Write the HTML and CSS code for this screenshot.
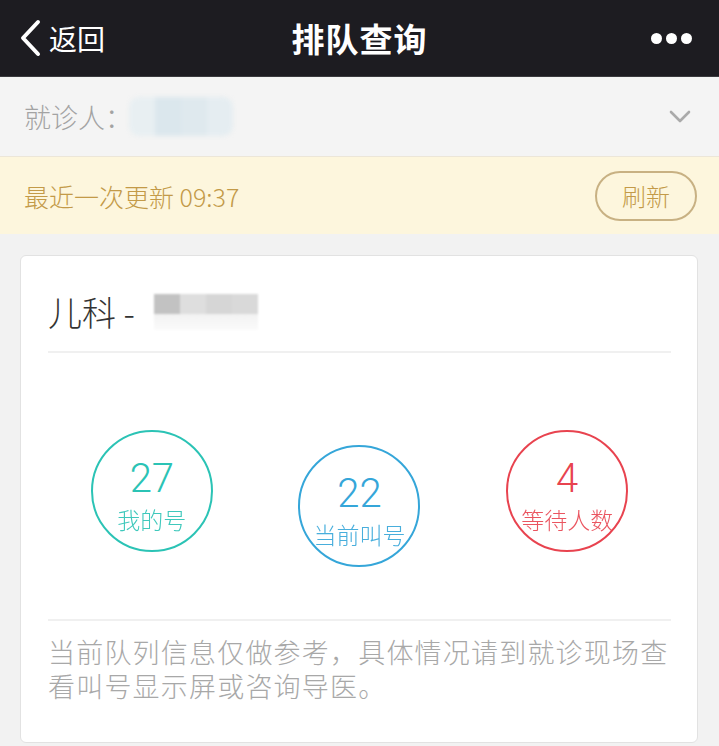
FILE: index.html
```html
<!DOCTYPE html>
<html lang="zh-CN">
<head>
<meta charset="utf-8">
<title>排队查询</title>
<link rel="stylesheet" href="styles.css">
</head>
<body>
<div class="page">
  <header class="nav">
    <div class="nav-back">
      <svg class="back-icon" width="24" height="38" viewBox="0 0 24 38"><path d="M20 3 L5 19 L20 35" fill="none" stroke="#fff" stroke-width="4" stroke-linecap="round" stroke-linejoin="round"/></svg>
      <span class="back-text">返回</span>
    </div>
    <div class="nav-title">排队查询</div>
    <div class="nav-more"><span class="dot"></span><span class="dot"></span><span class="dot"></span></div>
  </header>

  <div class="patient">
    <span class="patient-label">就诊人：</span>
    <span class="blur blur-blue"><i></i><i></i><i></i><i></i></span>
    <svg class="chev" width="22" height="14" viewBox="0 0 22 14"><path d="M2 2 L11 11 L20 2" fill="none" stroke="#aaa" stroke-width="2.6" stroke-linecap="round" stroke-linejoin="round"/></svg>
  </div>

  <div class="update">
    <span class="update-text">最近一次更新 09:37</span>
    <button class="refresh">刷新</button>
  </div>

  <section class="card">
    <div class="card-title">
      <span>儿科 - </span>
      <span class="blur blur-gray"><i></i><i></i><i></i><i></i></span>
    </div>
    <div class="stats">
      <div class="stat"><div class="ring teal"><span class="num">27</span><span class="lbl">我的号</span></div></div>
      <div class="stat low"><div class="ring blue"><span class="num">22</span><span class="lbl">当前叫号</span></div></div>
      <div class="stat"><div class="ring red"><span class="num">4</span><span class="lbl">等待人数</span></div></div>
    </div>
    <p class="note">当前队列信息仅做参考，具体情况请到就诊现场查看叫号显示屏或咨询导医。</p>
  </section>
</div>
</body>
</html>
```

FILE: styles.css
```css
* { box-sizing: border-box; }
html, body { margin: 0; padding: 0; }
body {
  width: 719px;
  height: 746px;
  overflow: hidden;
  background: #f2f2f2;
  font-family: "Noto Sans CJK SC", "Noto Sans", sans-serif;
}
.page { display: flex; flex-direction: column; }

.nav {
  height: 77px;
  background: #1d1c21;
  display: flex;
  align-items: center;
  position: relative;
  color: #fff;
  border-bottom: 1px solid #3a3a3e;
}
.nav-back { display: flex; align-items: center; padding-left: 18px; }
.back-icon { display: block; }
.back-text { font-size: 28px; margin-left: 7px; font-weight: 400; }
.nav-title {
  position: absolute;
  left: 0; right: 0;
  text-align: center;
  font-size: 33px;
  font-weight: 700;
  letter-spacing: 1px;
  pointer-events: none;
}
.nav-more { margin-left: auto; margin-right: 27px; display: flex; gap: 4px; }
.dot { width: 11px; height: 11px; border-radius: 50%; background: #fff; }

.patient {
  height: 80px;
  background: #f4f4f4;
  display: flex;
  align-items: center;
  padding: 0 28px 0 24px;
  border-bottom: 1px solid #ece6d8;
}
.patient-label { font-size: 27px; color: #a3a3a3; font-weight: 300; }
.blur {
  display: inline-flex;
  filter: blur(2px);
}
.blur i { display: block; width: 26px; }
.blur-blue { height: 39px; margin-left: -3px; border-radius: 10px; overflow: hidden; }
.blur-blue i:nth-child(1) { background: #e8eff2; }
.blur-blue i:nth-child(2) { background: #dbe7ed; }
.blur-blue i:nth-child(3) { background: #dfe9ee; }
.blur-blue i:nth-child(4) { background: #e5edf1; }
.chev { margin-left: auto; }

.update {
  height: 77px;
  background: #fdf6dd;
  display: flex;
  align-items: center;
  padding: 0 22px 0 24px;
}
.update-text { font-size: 25px; color: #c39a48; font-weight: 300; }
.refresh {
  margin-left: auto;
  width: 102px;
  height: 50px;
  border: 2px solid #c8b183;
  border-radius: 25px;
  background: transparent;
  color: #c39a48;
  font-family: inherit;
  font-size: 24px;
  font-weight: 300;
  padding: 0;
}

.card {
  margin: 21px 21px 0 20px;
  background: #fff;
  border: 1px solid #e2e2e2;
  border-radius: 6px;
  padding: 0 26px 0 27px;
  height: 488px;
}
.card-title {
  height: 97px;
  display: flex;
  align-items: center;
  padding-top: 16px;
  font-size: 34px;
  color: #333;
  font-weight: 300;
  border-bottom: 2px solid #f0f0f0;
  white-space: pre;
}
.blur-gray {
  display: inline-grid;
  grid-template-columns: repeat(4, 26px);
  grid-template-rows: 20px 16px;
  height: 36px;
  margin-left: 12px;
  margin-top: 0;
  filter: blur(1px);
}
.blur-gray i { width: auto; }
.blur-gray i:nth-child(1) { background: #c2c2c2; }
.blur-gray i:nth-child(2) { background: #dedede; }
.blur-gray i:nth-child(3) { background: #d6d6d6; }
.blur-gray i:nth-child(4) { background: #d9d9d9; }
.blur-gray::after { content: ""; grid-column: 1 / 5; background: linear-gradient(#f2f2f2, #fbfbfb); }

.stats {
  display: grid;
  grid-template-columns: repeat(3, 1fr);
  height: 268px;
  padding-top: 77px;
  border-bottom: 2px solid #f0f0f0;
}
.stat { display: flex; justify-content: center; align-items: flex-start; }
.stat.low { padding-top: 15px; }
.ring {
  width: 122px;
  height: 122px;
  border-radius: 50%;
  border: 2px solid currentColor;
  display: flex;
  flex-direction: column;
  align-items: center;
  justify-content: center;
  padding-top: 9px;
}
.num { font-family: "Roboto", "Liberation Sans", sans-serif; font-size: 40px; line-height: 42px; font-weight: 300; }
.lbl { font-size: 23px; line-height: 30px; font-weight: 300; white-space: nowrap; margin-top: 4px; opacity: 0.9; }
.teal { color: #2bc3b5; }
.blue { color: #35a6d9; }
.red { color: #e8434f; }

.note {
  margin: 14px 0 0;
  font-size: 27px;
  line-height: 34px;
  color: #a8a8a8;
  font-weight: 300;
  letter-spacing: 1.2px;
}
```
